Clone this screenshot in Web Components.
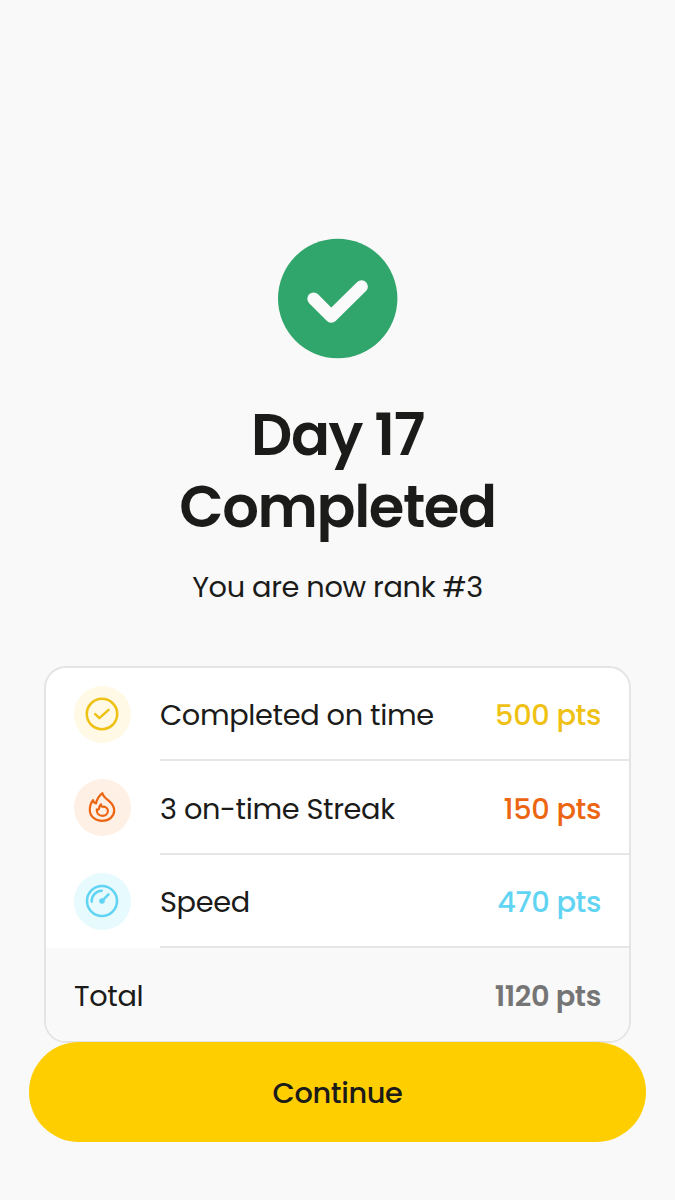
<!DOCTYPE html>
<html lang="en">
<head>
<meta charset="utf-8">
<title>Day 17 Completed</title>
<style>
body{
    margin: 0;
    background: #f9f9f9;
    color: #1b1b1a;
    font-family: Poppins, Inter, "Open Sans", sans-serif;
    letter-spacing: -0.36px;
}
</style>
</head>
<body>
<day-result>
    <success-badge slot="badge"></success-badge>
    <span slot="day">Day 17</span>
    <span slot="state">Completed</span>
    <span slot="rank">You are now rank #3</span>
    <points-card>
        <points-row icon="check" style="--tint:#fff9e6;--color:#efc114">
            Completed on time<span slot="points">500 pts</span>
        </points-row>
        <points-row icon="fire" style="--tint:#fff0e6;--color:#ec6512">
            3 on-time Streak<span slot="points">150 pts</span>
        </points-row>
        <points-row icon="speed" style="--tint:#e7fafe;--color:#60d4f2">
            Speed<span slot="points">470 pts</span>
        </points-row>
        <points-total slot="total">Total<span slot="points">1120 pts</span></points-total>
    </points-card>
    <main-button slot="action">Continue</main-button>
</day-result>

<script>
class DayResult extends HTMLElement {
    constructor() {
        super();
        this.attachShadow({mode:'open'});
        this.shadowRoot.innerHTML = `
<style>
:host{
    display: flex;
    flex-direction: column;
    box-sizing: border-box;
    width: 675px;
    height: 1200px;
    padding: 238px 29px 58px;
}
header{
    display: flex;
    flex-direction: column;
    align-items: center;
}
h1{
    margin: 41px 0 0;
    font-size: 57.6px;
    line-height: 72px;
    font-weight: 600;
    letter-spacing: -1.4px;
    text-align: center;
}
.day, .state{
    display: block;
}
p{
    margin: 23px 0 0;
    font-size: 28.8px;
    line-height: 43px;
}
.content{
    display: flex;
    flex-direction: column;
    margin: 57px 15px 0;
    height: 376px;
}
</style>
<header>
    <slot name="badge"></slot>
    <h1><slot class="day" name="day"></slot><slot class="state" name="state"></slot></h1>
    <p><slot name="rank"></slot></p>
</header>
<div class="content"><slot></slot></div>
<slot name="action"></slot>
`;
    }
}
customElements.define('day-result', DayResult);

class SuccessBadge extends HTMLElement {
    constructor() {
        super();
        this.attachShadow({mode:'open'});
        this.shadowRoot.innerHTML = `
<style>
:host{
    display: block;
    width: 120px;
    height: 120px;
}
svg{
    display: block;
}
</style>
<svg width="120" height="121" viewBox="0 0 120 121" fill="none">
    <circle cx="59.7" cy="60.5" r="59.7" fill="#31a66c"/>
    <path d="M35.6 60.8 53.2 78.4 83.6 48.6" stroke="#fafafa" stroke-width="12.6" stroke-linecap="round" stroke-linejoin="round"/>
</svg>
`;
    }
}
customElements.define('success-badge', SuccessBadge);

class PointsCard extends HTMLElement {
    constructor() {
        super();
        this.attachShadow({mode:'open'});
        this.shadowRoot.innerHTML = `
<style>
:host{
    display: block;
    box-sizing: border-box;
    width: 587px;
    height: 377px;
    flex: none;
    border: 2px solid #e4e4e4;
    border-radius: 22px;
    background: #fff;
    overflow: hidden;
}
</style>
<slot></slot>
<slot name="total"></slot>
`;
    }
}
customElements.define('points-card', PointsCard);

const icons = {
    check: `<circle cx="18" cy="18" r="15.2"/><path d="m11.2 18.2 4.2 3.9 9.1-8.3"/>`,
    fire: `<path stroke-width="2.2" d="M18.4 4.2c.8 3.6 3.8 5.4 7 8.2 2.9 2.6 4.8 5.3 4.8 8.9 0 6.1-5 10.5-12 10.5S5.800 27.200 5.800 21c0-4 1.200-7.300 3.200-9.800.3 1.500 1.200 2.700 3 3.300.9-4.300 3-7.700 6.400-10.300Z"/><path stroke-width="2.2" d="M17 15.400c-.3 1.400.2 2.200 1.700 2.200 3 0 5.200 1.800 5.200 4.400 0 2.800-2.300 4.900-5.400 4.900-3.700 0-6.200-2.600-5.700-6.500 1.100.6 2 .3 2.200-.8.2-1.700.8-3 2-4.200Z"/>`,
    speed: `<circle cx="18" cy="18" r="15"/><path d="M7.7 18.700A10.300 10.300 0 0 1 17.700 7.700M18 18l6.500-6.700"/><circle cx="18" cy="18" r="2.800" fill="currentColor" stroke="none"/>`
};

class PointsRow extends HTMLElement {
    constructor() {
        super();
        this.attachShadow({mode:'open'});
        this.shadowRoot.innerHTML = `
<style>
:host{
    display: flex;
    align-items: stretch;
    height: 93.3px;
    font-size: 28.8px;
}
.icon{
    display: flex;
    align-items: center;
    justify-content: center;
    width: 57px;
    height: 57px;
    margin: 18px 29px 0 28px;
    border-radius: 50%;
    background: var(--tint);
    color: var(--color);
}
.icon svg{
    margin: 0 1px 1px 0;
}
.line{
    display: flex;
    flex: 1;
    align-items: center;
    justify-content: space-between;
    box-sizing: border-box;
    padding: 3px 28px 0 0;
    border-bottom: 2px solid #e6e6e6;
}
:host(:not(:first-child)) .line{
    padding-top: 5px;
}
.points{
    color: var(--color);
    font-weight: 500;
}
</style>
<div class="icon">
    <svg width="36" height="36" viewBox="0 0 36 36" fill="none" stroke="currentColor" stroke-width="2.5" stroke-linecap="round" stroke-linejoin="round">${icons[this.getAttribute('icon')]}</svg>
</div>
<div class="line">
    <span><slot></slot></span>
    <span class="points"><slot name="points"></slot></span>
</div>
`;
    }
}
customElements.define('points-row', PointsRow);

class PointsTotal extends HTMLElement {
    constructor() {
        super();
        this.attachShadow({mode:'open'});
        this.shadowRoot.innerHTML = `
<style>
:host{
    display: flex;
    align-items: center;
    justify-content: space-between;
    box-sizing: border-box;
    height: 94px;
    padding: 3px 28px 0;
    background: #f9f9f9;
    font-size: 28.8px;
}
.points{
    color: #757575;
    font-weight: 600;
}
</style>
<span><slot></slot></span>
<span class="points"><slot name="points"></slot></span>
`;
    }
}
customElements.define('points-total', PointsTotal);

class MainButton extends HTMLElement {
    constructor() {
        super();
        this.attachShadow({mode:'open'});
        this.shadowRoot.innerHTML = `
<style>
:host{
    display: block;
    position: relative;
}
button{
    display: block;
    width: 617px;
    height: 100px;
    padding: 2px 0 0;
    border: 0;
    border-radius: 50px;
    background: #ffce00;
    color: #1b1b1a;
    font: 500 28.8px Poppins, Inter, "Open Sans", sans-serif;
    letter-spacing: inherit;
}
</style>
<button><slot></slot></button>
`;
    }
}
customElements.define('main-button', MainButton);
</script>
</body>
</html>
